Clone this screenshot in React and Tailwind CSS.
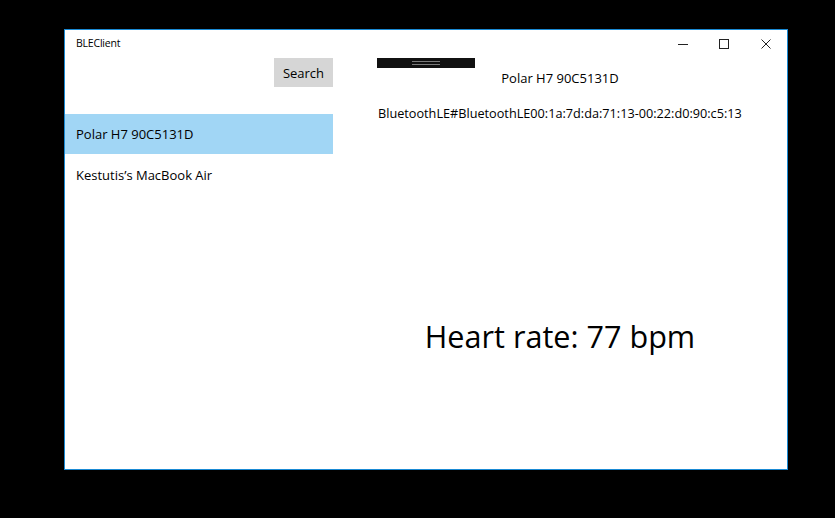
export default function App() {
  const font = { fontFamily: '"Open Sans", "Noto Sans", sans-serif' };
  return (
    <div className="w-[835px] h-[518px] bg-black pl-[64px] pt-[29px]" style={font}>
      <div className="w-[724px] h-[441px] border border-[#1a8ad4] bg-white flex flex-col">
        <div className="h-[28px] flex items-center justify-between shrink-0">
          <div className="pl-[11px] text-[10.5px] text-black tracking-[-0.2px] -mt-[1px]">BLEClient</div>
          <div className="flex items-center h-full">
            <div className="w-[41px] h-full flex items-center justify-center">
              <svg width="10" height="10" viewBox="0 0 10 10"><path d="M0 5.5H10" stroke="#222" strokeWidth="1" /></svg>
            </div>
            <div className="w-[41px] h-full flex items-center justify-center">
              <svg width="10" height="10" viewBox="0 0 10 10"><rect x="0.5" y="0.5" width="9" height="9" fill="none" stroke="#222" strokeWidth="1" /></svg>
            </div>
            <div className="w-[43px] h-full flex items-center justify-center">
              <svg width="10" height="10" viewBox="0 0 10 10"><path d="M0.5 0.5L9.5 9.5M9.5 0.5L0.5 9.5" stroke="#222" strokeWidth="1" /></svg>
            </div>
          </div>
        </div>
        <div className="flex flex-1">
          <div className="w-[268px] flex flex-col">
            <div className="flex justify-end">
              <div className="w-[59px] h-[29px] bg-[#d6d6d6] flex items-center justify-center text-[13px] text-black pt-[2px]">Search</div>
            </div>
            <div className="mt-[27px] h-[40px] bg-[#a1d6f5] flex items-center pl-[11px] text-[13px] text-black pt-[1px]">Polar H7 90C5131D</div>
            <div className="h-[42px] flex items-center pl-[11px] text-[13px] text-black pt-[1px]">Kestutis’s MacBook Air</div>
          </div>
          <div className="flex-1 flex flex-col">
            <div className="ml-[44px] w-[98px] h-[10px] bg-[#111111] flex items-center justify-center">
              <div className="w-[28px] h-[4px] border-y border-[#7a7a7a]"></div>
            </div>
            <div className="mt-[1px] text-center text-[13px] text-black leading-[18px]">Polar H7 90C5131D</div>
            <div className="mt-[17px] ml-[45px] text-[12.7px] text-black leading-[18px] whitespace-nowrap">BluetoothLE#BluetoothLE00:1a:7d:da:71:13-00:22:d0:90:c5:13</div>
            <div className="mt-[194px] text-center text-[30.6px] text-black leading-[40px]">Heart rate: 77 bpm</div>
          </div>
        </div>
      </div>
    </div>
  );
}
